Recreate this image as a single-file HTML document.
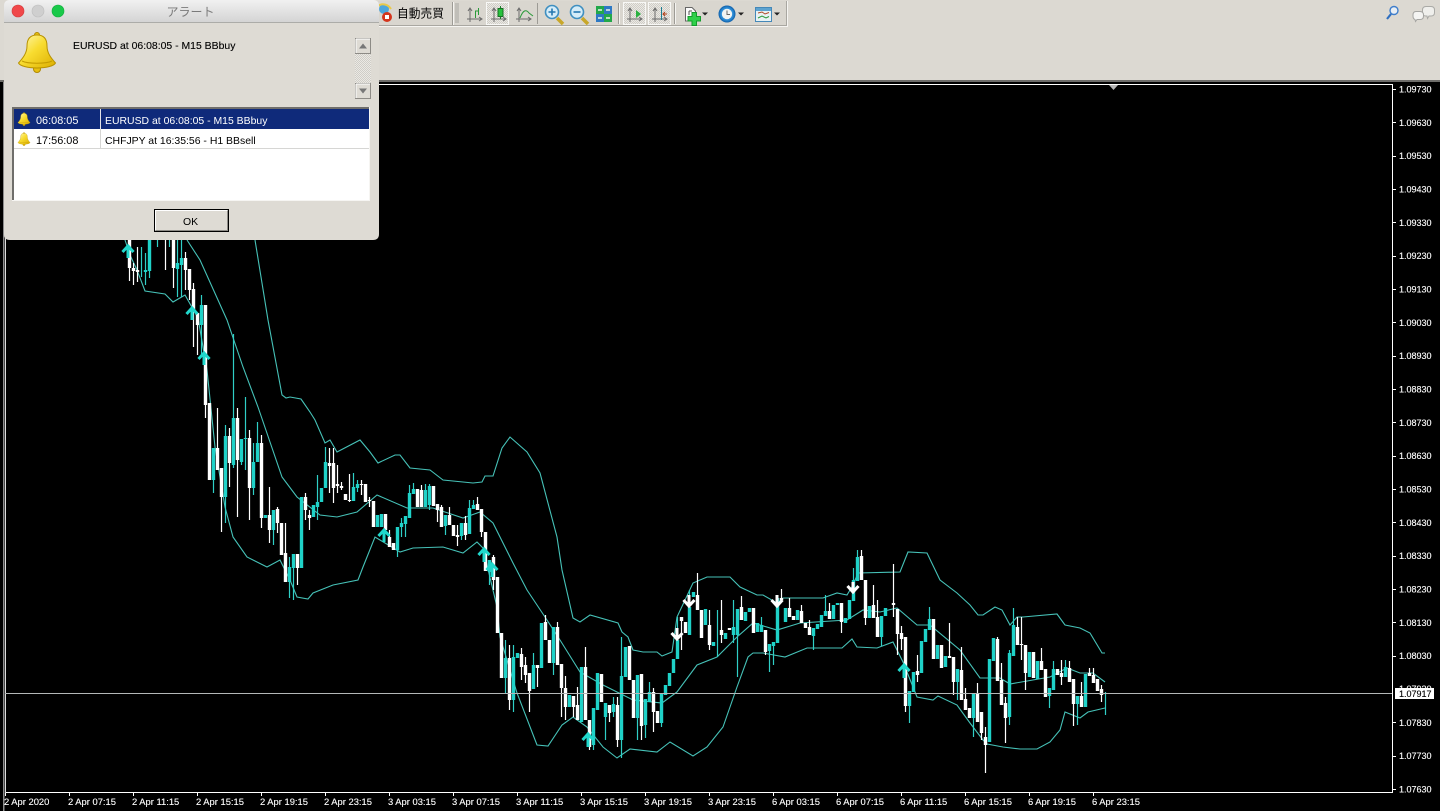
<!DOCTYPE html>
<html lang="ja"><head><meta charset="utf-8"><title>アラート</title>
<style>
html,body{margin:0;padding:0;background:#000;width:1440px;height:811px;overflow:hidden}
svg{display:block;filter:blur(.3px)}
text{font-family:"Liberation Sans","Noto Sans CJK JP",sans-serif}
.p text{font-size:9px;fill:#fff;stroke:#fff;stroke-width:.12px}
.t text{font-size:9.4px;fill:#fff;stroke:#fff;stroke-width:.12px}
.d{stroke:currentColor;stroke-width:.12px}
</style></head><body>
<svg width="1440" height="811" viewBox="0 0 1440 811" xmlns="http://www.w3.org/2000/svg">
<defs>
<pattern id="dots" width="2" height="2" patternUnits="userSpaceOnUse"><rect width="2" height="2" fill="#ebe9e4"/><rect width="1" height="1" fill="#cfcdc7"/><rect x="1" y="1" width="1" height="1" fill="#cfcdc7"/></pattern>
<linearGradient id="title" x1="0" y1="0" x2="0" y2="1"><stop offset="0" stop-color="#f1f1f1"/><stop offset="1" stop-color="#d4d4d4"/></linearGradient>
<linearGradient id="bellg" x1="0" y1="0" x2="1" y2="1"><stop offset="0" stop-color="#fff9b8"/><stop offset=".45" stop-color="#f8dc30"/><stop offset="1" stop-color="#dcae00"/></linearGradient>
<radialGradient id="blue"><stop offset=".7" stop-color="#2f8fd8"/><stop offset="1" stop-color="#0e5ea8"/></radialGradient>
<g id="bell"><circle cx="37" cy="69" r="3.500" fill="#e8bf10" stroke="#b08a00"/><circle cx="37" cy="35" r="2.500" fill="#e8bf10" stroke="#b08a00"/><path d="M37 35C30 35 27 39 27 46C27 53 23 58 18.500 63C20 66 28 68 37 68C46 68 54 66 55.500 63C51 58 47 53 47 46C47 39 44 35 37 35Z" fill="url(#bellg)" stroke="#b89200" stroke-width="1"/><path d="M22 61C28 64 46 64 52 61" fill="none" stroke="#c49c00"/></g>
<g id="axis" fill="none" stroke="#6b6b6b"><path d="M0 0V14M-3 11H12M-2 3L0 0L2 3M9 9L12 11L9 13"/></g>
</defs>

<rect width="1440" height="811" fill="#000"/>
<!-- toolbar area -->
<rect width="1440" height="80" fill="#dcd9d2"/>
<rect y="80" width="1440" height="2" fill="#6e6d6a"/>
<rect x="372" y="1" width="415" height="25" fill="#d9d6cf"/>
<path d="M372 26.500H787.500V1" fill="none" stroke="#f6f5f2"/>
<path d="M372 25.500H786.500V1" fill="none" stroke="#a9a7a1"/>

<circle cx="384" cy="9" r="5" fill="#4da6dc"/><path d="M378 6C382 3 388 4 391 9" stroke="#e9c94a" stroke-width="2" fill="none"/>
<circle cx="387" cy="17" r="5" fill="#d4351c"/><rect x="385" y="15" width="4" height="4" fill="#fff"/>
<text x="397" y="17.500" font-size="11.700" fill="#000" style="letter-spacing:.05px">自動売買</text>
<path d="M452.500 2V25" stroke="#9d9b95"/><path d="M453.500 2V25" stroke="#f5f4f1"/>
<path d="M455 4H459M455 6H459M455 8H459M455 10H459M455 12H459M455 14H459M455 16H459M455 18H459M455 20H459M455 22H459" stroke="#a8a6a0"/>

<use href="#axis" x="470" y="8"/><path d="M475.500 18V11H478M478.500 15V8" stroke="#2a9a3a" fill="none"/>
<rect x="486.500" y="2.500" width="22" height="22" fill="url(#dots)" stroke="#f8f8f6"/>
<use href="#axis" x="494" y="8"/><path d="M500.500 6V19" stroke="#1f7d2c"/><rect x="498" y="8.500" width="5" height="8" fill="#26c23c" stroke="#186e25"/>
<use href="#axis" x="519" y="8"/><path d="M520 18C523 10 526 9 529 13L533 16" stroke="#2a9a3a" fill="none"/>
<path d="M537.500 3V24" stroke="#9d9b95"/>

<path d="M557 18L563 24" stroke="#c8a72a" stroke-width="3.500"/><circle cx="552" cy="12" r="6.500" fill="#d5ecf8" stroke="#3f8fc0" stroke-width="1.600"/><path d="M548.500 12H555.500M552 8.500V15.500" stroke="#2477b0" stroke-width="1.600"/>
<path d="M582 18L588 24" stroke="#c8a72a" stroke-width="3.500"/><circle cx="577" cy="12" r="6.500" fill="#d5ecf8" stroke="#3f8fc0" stroke-width="1.600"/><path d="M573.500 12H580.500" stroke="#2477b0" stroke-width="1.600"/>
<rect x="596" y="6" width="8" height="8" fill="#22a84a"/><rect x="604" y="6" width="8" height="8" fill="#2e79c4"/><rect x="596" y="14" width="8" height="8" fill="#2e79c4"/><rect x="604" y="14" width="8" height="8" fill="#22a84a"/>
<path d="M598 10H602M606 10H610M598 18H602M606 18H610" stroke="#e8f4e8" stroke-width="1.500"/>
<path d="M618.500 3V24" stroke="#9d9b95"/><path d="M619.500 3V24" stroke="#f5f4f1"/>

<rect x="623.500" y="2.500" width="22" height="22" fill="url(#dots)" stroke="#f8f8f6"/>
<use href="#axis" x="630" y="8"/><path d="M636 10L641 14L636 18Z" fill="#28b040"/>
<rect x="648.500" y="2.500" width="22" height="22" fill="url(#dots)" stroke="#f8f8f6"/>
<use href="#axis" x="655" y="8"/><path d="M661.500 7V20" stroke="#1d7d90"/><path d="M667 14H663M665 12L663 14L665 16" stroke="#b0401a" fill="none"/>
<path d="M674.500 3V24" stroke="#9d9b95"/><path d="M675.500 3V24" stroke="#f5f4f1"/>

<path d="M685.500 7.500H692L695.500 11V21H685.500Z" fill="#fbfbfb" stroke="#666"/><path d="M689 11V15M689 11H692" stroke="#555" fill="none"/>
<path d="M692 12.500H696.500V16.500H700.500V21H696.500V25.500H692V21H688V16.500H692Z" fill="#2fd04a" stroke="#149c2c"/>
<path d="M702 12.500H708L705 15.500Z" fill="#222"/>
<circle cx="727" cy="14" r="8.500" fill="url(#blue)"/><circle cx="727" cy="14" r="5.200" fill="#f2f4f2"/><path d="M727 10.500V14.500H730" stroke="#666" fill="none"/>
<path d="M738 12.500H744L741 15.500Z" fill="#222"/>
<rect x="755.500" y="7.500" width="16" height="14" fill="#e8f2f4" stroke="#4588b8"/><rect x="756" y="8" width="15" height="3" fill="#5da3d0"/>
<path d="M758 13L762 12L765 14L769 12.500" stroke="#b04a28" fill="none"/><path d="M758 18L762 16L766 18L769 16.500" stroke="#2a9a3a" fill="none"/>
<path d="M774 12.500H780L777 15.500Z" fill="#222"/>

<!-- right icons -->
<circle cx="1394" cy="10.500" r="4" fill="#e8eef4" stroke="#3f7ecb" stroke-width="1.400"/><path d="M1391 14L1387 19" stroke="#2f6fc0" stroke-width="2.200"/>
<path d="M1426 6.500H1431Q1434.500 6.500 1434.500 10V12.500Q1434.500 16 1431 16H1429L1427.500 18.500L1427 16H1426Q1422.500 16 1422.500 12.500V10Q1422.500 6.500 1426 6.500Z" fill="#efefec" stroke="#aaaaa6"/>
<path d="M1416 11.500H1420Q1423.500 11.500 1423.500 15V16Q1423.500 19.500 1420 19.500H1417L1415.500 21.500L1415 19.500Q1413 19 1413 16V15Q1413 11.500 1416 11.500Z" fill="#f4f4f2" stroke="#a5a5a2"/>

<!-- chart frame -->
<rect x="3" y="82" width="1.500" height="729" fill="#8c8c8c"/>
<path d="M5.500 84.500H1392.500V792.500H5.500" fill="none" stroke="#fff"/>
<path d="M5.500 84V793" stroke="#ddd"/>
<path d="M1109 85H1118L1113.500 90Z" fill="#b5b5b5"/>
<!-- price ticks -->
<path d="M1393 89.500h3M1393 122.500h3M1393 156.500h3M1393 189.500h3M1393 222.500h3M1393 256.500h3M1393 289.500h3M1393 322.500h3M1393 356.500h3M1393 389.500h3M1393 422.500h3M1393 456.500h3M1393 489.500h3M1393 522.500h3M1393 556.500h3M1393 589.500h3M1393 622.500h3M1393 656.500h3M1393 722.500h3M1393 756.500h3M1393 789.500h3" stroke="#fff"/>
<g class="p">
<text x="1399" y="92.500">1.09730</text><text x="1399" y="126">1.09630</text><text x="1399" y="159">1.09530</text><text x="1399" y="192.500">1.09430</text><text x="1399" y="226">1.09330</text><text x="1399" y="259">1.09230</text><text x="1399" y="292.500">1.09130</text><text x="1399" y="326">1.09030</text><text x="1399" y="359">1.08930</text><text x="1399" y="392.500">1.08830</text><text x="1399" y="426">1.08730</text><text x="1399" y="459">1.08630</text><text x="1399" y="492.500">1.08530</text><text x="1399" y="526">1.08430</text><text x="1399" y="559">1.08330</text><text x="1399" y="592.500">1.08230</text><text x="1399" y="626">1.08130</text><text x="1399" y="659">1.08030</text><text x="1399" y="692">1.07930</text><text x="1399" y="726">1.07830</text><text x="1399" y="759">1.07730</text><text x="1399" y="792.500">1.07630</text>
</g>
<!-- time ticks -->
<path d="M5.500 793v3M69.500 793v3M133.500 793v3M197.500 793v3M261.500 793v3M325.500 793v3M389.500 793v3M453.500 793v3M517.500 793v3M581.500 793v3M645.500 793v3M709.500 793v3M773.500 793v3M837.500 793v3M901.500 793v3M965.500 793v3M1029.500 793v3M1093.500 793v3" stroke="#fff"/>
<g class="t">
<text x="4" y="805">2 Apr 2020</text><text x="68" y="805">2 Apr 07:15</text><text x="132" y="805">2 Apr 11:15</text><text x="196" y="805">2 Apr 15:15</text><text x="260" y="805">2 Apr 19:15</text><text x="324" y="805">2 Apr 23:15</text><text x="388" y="805">3 Apr 03:15</text><text x="452" y="805">3 Apr 07:15</text><text x="516" y="805">3 Apr 11:15</text><text x="580" y="805">3 Apr 15:15</text><text x="644" y="805">3 Apr 19:15</text><text x="708" y="805">3 Apr 23:15</text><text x="772" y="805">6 Apr 03:15</text><text x="836" y="805">6 Apr 07:15</text><text x="900" y="805">6 Apr 11:15</text><text x="964" y="805">6 Apr 15:15</text><text x="1028" y="805">6 Apr 19:15</text><text x="1092" y="805">6 Apr 23:15</text>
</g>

<!-- bands -->
<g fill="none" stroke="#46c2b8" stroke-width="1.100">
<polyline points="255,240 268,320 282,395 286,398 290,397 301,399 310,412 315,420 325,443 330,440 337,452 360,440 370,452 378,463 395,455 400,455 410,468 430,470 443,480 473,483 482,482 485,476 493,476 502,448 510,437 527,452 540,473 557,537 562,570 573,618 580,622 590,615 618,623 622,632 628,637 633,650 643,652 657,652 662,656 672,652 677,617 693,583 707,577 730,577 740,587 757,595 763,595 777,603 783,598 823,598 837,593 847,595 853,585 858,573 900,572 908,552 927,553 940,580 957,593 970,605 978,615 983,615 995,607 1002,610 1010,625 1017,617 1023,617 1057,614 1065,625 1080,628 1090,633 1102,653 1105,653"/>
<polyline points="187,240 200,260 227,320 243,367 258,407 282,477 297,497 320,515 337,517 357,512 377,495 407,508 433,508 463,518 480,512 493,523 513,563 527,590 545,617 560,640 580,672 603,685 633,700 662,703 677,692 697,665 717,657 737,637 753,623 777,630 800,623 847,620 863,610 880,612 897,608 917,625 930,625 960,650 980,678 1000,678 1010,684 1050,677 1067,668 1080,673 1093,673 1105,682"/>
<polyline points="125,240 130,255 137,270 145,291 165,294 173,302 185,295 198,318 207,370 215,447 225,507 233,537 247,557 267,567 280,560 290,580 297,597 308,599 313,593 333,585 358,580 363,567 375,537 400,552 413,548 443,547 463,553 477,542 483,548 497,607 500,637 517,693 537,745 548,746 562,725 573,717 587,727 603,747 617,758 630,749 657,752 670,742 693,756 707,747 723,727 737,687 748,657 753,653 763,653 785,657 807,648 842,648 852,639 857,647 877,648 893,642 903,662 917,697 933,700 938,696 957,705 970,723 983,740 987,744 1003,747 1020,749 1037,749 1050,742 1060,730 1065,712 1080,718 1088,712 1105,708"/>
</g>

<!-- candles -->
<g transform="translate(.5,0)">
<path fill="none" stroke="#2fcfc6" stroke-width="1.200" d="M141 247V277M145 253V285M149 271V278M157 240V247M169 240V247M177 240V297M181 240V297M201 295V355M213 480V493M225 425V523M233 334V468M241 439V465M245 397V470M253 443V495M257 422V462M273 530V545M289 557V598M293 568V600M317 475V520M325 447V488M353 473V501M357 480V492M397 527V557M401 518V537M405 516V537M409 485V518M413 483V494M425 484V507M429 484V510M445 515V535M461 523V540M469 500V534M473 500V509M489 560V585M505 640V693M513 645V712M533 653V689M553 627V675M593 708V750M605 703V740M613 697V717M621 637V758M637 675V740M645 699V738M649 682V702M661 693V727M677 617V659M689 590V635M717 610V657M733 600V643M737 609V677M761 617V632M769 644V672M773 642V665M813 628V650M825 595V616M853 568V601M857 550V581M881 616V646M909 691V723M929 607V630M957 669V700M973 693V737M1009 650V725M1013 608V656M1049 688V708M1053 661V690M1065 660V677M1077 696V725M1105 692V715"/>
<path fill="none" stroke="#1fd2c8" stroke-width="3.400" d="M145 270V272M149 240V271M177 263V269M181 258V265M201 305V325M213 448V480M225 436V497M233 418V465M241 439V462M245 438V439M253 462V488M257 443V462M265 515V518M273 510V530M289 567V582M293 554V568M301 497V568M313 505V517M317 502V507M321 488V502M325 462V488M353 487V501M357 484V488M377 515V527M381 514V527M397 527V550M401 523V527M405 516V524M409 493V518M413 489V494M425 490V507M429 486V505M445 515V526M461 523V536M469 508V534M473 505V509M489 560V572M505 658V678M513 657V700M517 653V658M533 665V689M541 623V668M553 627V663M569 695V707M581 667V722M593 708V745M597 673V710M605 703V717M613 704V712M621 676V740M625 647V677M637 675V718M645 699V725M649 692V702M661 693V723M665 685V695M669 673V686M673 659V673M677 640V659M689 607V635M693 592V597M705 609V625M713 642V646M725 633V639M733 627V635M737 609V635M745 612V621M749 608V612M757 623V632M761 625V632M769 644V651M773 642V646M777 598V643M785 608V622M797 610V620M813 628V636M817 624V629M821 615V627M825 611V616M833 605V619M837 603V605M845 618V623M849 600V619M853 580V601M857 557V581M869 606V618M881 616V637M885 608V616M909 691V706M913 672V692M921 641V673M925 629V642M929 619V630M937 645V659M945 656V667M957 669V682M973 693V718M989 659V742M993 638V661M1009 653V717M1013 625V656M1029 652V677M1037 661V679M1049 688V696M1053 669V690M1065 667V677M1077 696V704M1085 674V707M1105 693V694"/>
<path fill="none" stroke="#fff" stroke-width="1.200" d="M129 240V281M133 263V285M137 247V282M165 240V270M173 240V288M185 252V290M189 269V300M193 283V347M197 313V355M205 405V418M217 408V470M221 468V532M229 428V487M237 408V517M249 430V520M261 435V528M269 487V543M277 507V533M285 523V582M297 568V585M305 493V520M309 510V530M329 448V493M333 448V503M337 465V493M341 482V490M349 474V502M361 480V495M369 497V507M389 530V547M421 485V507M437 504V522M441 505V527M449 507V525M457 525V546M465 516V540M477 497V510M481 509V537M493 555V590M509 645V710M521 648V680M525 657V683M529 673V712M537 665V687M545 615V640M557 622V665M561 664V717M565 676V720M573 696V717M577 687V720M585 647V720M589 720V750M609 705V722M617 697V747M641 674V740M653 688V732M681 617V650M697 573V610M709 610V650M721 600V643M741 596V620M765 630V655M781 589V600M789 598V617M801 605V623M809 620V635M829 603V619M841 603V633M861 550V580M865 580V625M873 585V618M877 600V637M893 564V617M897 609V655M901 626V650M905 637V712M917 655V682M933 619V659M949 623V658M953 657V695M961 647V700M965 688V710M977 683V722M981 712V740M985 727V773M997 637V681M1001 663V705M1005 697V743M1017 617V645M1021 617V660M1025 645V690M1041 648V670M1045 669V697M1061 660V685M1069 661V682M1073 679V726M1081 682V707M1089 668V676M1093 668V683M1101 685V702"/>
<path fill="none" stroke="#fff" stroke-width="3.400" d="M129 240V268M133 268V271M137 270V272M173 240V268M185 258V270M189 269V290M193 289V310M197 313V325M205 305V405M209 403V480M217 448V470M221 468V497M229 436V463M237 418V460M249 438V488M261 443V518M269 515V530M277 509V523M281 523V555M285 553V582M297 554V568M305 497V510M309 515V518M329 463V466M333 463V488M337 484V486M341 486V488M345 494V500M349 500V501M361 484V485M365 484V502M369 500V501M373 501V527M385 514V530M389 537V547M393 543V550M417 489V507M421 490V507M433 486V506M437 504V510M441 507V527M449 515V525M453 525V536M457 535V537M465 523V535M477 504V510M481 509V532M485 532V571M493 557V580M497 577V633M501 633V678M509 658V700M521 654V667M525 665V675M529 673V691M537 665V668M545 622V640M549 640V663M557 627V665M561 664V688M565 688V707M573 696V707M577 705V720M585 667V720M589 720V747M601 674V702M609 705V713M617 705V740M629 646V680M633 680V718M641 674V726M653 692V712M657 711V723M681 617V621M685 622V633M697 595V610M701 610V638M709 625V645M721 630V635M729 628V630M741 607V620M753 608V633M765 630V652M781 598V600M789 608V617M793 616V620M801 611V623M805 623V628M809 627V635M829 611V619M841 603V622M861 556V580M865 580V618M873 605V618M877 617V637M893 603V605M897 609V634M901 633V639M905 637V706M917 671V675M933 619V659M941 645V668M949 656V658M953 657V682M961 670V700M965 699V710M969 708V718M977 693V722M981 712V733M985 737V745M997 639V681M1001 680V705M1005 703V718M1017 627V645M1021 644V645M1025 645V673M1033 652V678M1041 661V670M1045 669V697M1057 669V675M1061 673V677M1069 668V682M1073 679V704M1081 696V707M1089 673V676M1093 675V683M1097 679V691M1101 689V695"/>
</g>

<!-- arrows -->
<g fill="none" stroke="#20d8cc" stroke-width="3">
<path d="M122.500 252L128 246L133.500 252M128 246V258"/><path d="M186.500 314L192 308L197.500 314M192 308V320"/><path d="M198.500 359L204 353L209.500 359M204 353V365"/><path d="M378.500 536L384 530L389.500 536M384 530V542"/><path d="M478.500 555L484 549L489.500 555M484 549V562"/><path d="M486.500 570L492 564L497.500 570M492 564V577"/><path d="M582.500 740L588 734L593.500 740M588 734V747"/><path d="M898.500 671L904 665L909.500 671M904 665V678"/>
</g>
<g fill="none" stroke="#fff" stroke-width="3">
<path d="M671.500 633L677 639L682.500 633M677 639V628"/><path d="M683.500 600L689 606L694.500 600M689 606V595"/><path d="M771.500 600L777 606L782.500 600M777 606V595"/><path d="M847.500 586L853 592L858.500 586M853 592V582"/>
</g>

<!-- crosshair / current price -->
<path d="M5 693.500H1392" stroke="#b4b8b8"/>
<rect x="1395" y="688" width="39" height="11" fill="#fff"/>
<text x="1399" y="697" font-size="9" fill="#000" class="d" color="#000">1.07917</text>

<!-- dialog -->
<path d="M10 0H373Q379 0 379 6V234Q379 240 373 240H10Q4 240 4 234V6Q4 0 10 0Z" fill="#dedbd4"/>
<path d="M10 0H373Q379 0 379 6V22H4V6Q4 0 10 0Z" fill="url(#title)"/>
<path d="M4 22.500H379" stroke="#acaca8"/>
<circle cx="18" cy="11" r="6" fill="#f0484a" stroke="#d23a3a" stroke-width=".6"/><circle cx="38" cy="11" r="6" fill="#cfcfcf" stroke="#bdbdbd" stroke-width=".6"/><circle cx="58" cy="11" r="6" fill="#19c94a" stroke="#12ad3c" stroke-width=".6"/>
<text x="190.500" y="16" font-size="12" fill="#7a7a7a" text-anchor="middle">アラート</text>
<use href="#bell"/>
<text x="73" y="49" font-size="10.450" fill="#000" class="d" color="#000">EURUSD at 06:08:05 - M15 BBbuy</text>
<!-- scrollbar -->
<rect x="355" y="54" width="16" height="29" fill="url(#dots)"/>
<rect x="355.500" y="38.500" width="15" height="15" fill="#dedbd4" stroke="#8d8b86"/><path d="M356 39H370M356 39V53" stroke="#fff"/><path d="M359 48.500H367L363 43.500Z" fill="#777"/>
<rect x="355.500" y="83.500" width="15" height="15" fill="#dedbd4" stroke="#8d8b86"/><path d="M356 84H370M356 84V98" stroke="#fff"/><path d="M359 88.500H367L363 93.500Z" fill="#777"/>
<!-- list -->
<rect x="12" y="107" width="358" height="94" fill="#fff"/>
<path d="M13 200V108H369" fill="none" stroke="#6f6e6b" stroke-width="2"/>
<path d="M12 200.500H369.500V107" fill="none" stroke="#f6f5f2"/>
<rect x="14" y="109" width="355" height="20" fill="#0f2a7a"/>
<path d="M14 148.500H369" stroke="#d6d6d4"/>
<path d="M100.500 109V129" stroke="#e4e4e8"/><path d="M100.500 129V149" stroke="#d6d6d4"/>
<use href="#bell" transform="translate(11.800,101.800) scale(.33)"/>
<use href="#bell" transform="translate(11.800,121.800) scale(.33)"/>
<text x="36" y="124" font-size="10.900" fill="#fff">06:08:05</text>
<text x="105" y="124" font-size="10.450" fill="#fff">EURUSD at 06:08:05 - M15 BBbuy</text>
<text x="36" y="144" font-size="10.900" fill="#000">17:56:08</text>
<text x="105" y="144" font-size="10.450" fill="#000">CHFJPY at 16:35:56 - H1 BBsell</text>
<!-- OK -->
<rect x="154.500" y="209.500" width="74" height="22" fill="#dedbd4" stroke="#000"/>
<path d="M155.500 230V210.500H227.500" fill="none" stroke="#fff"/><path d="M155.500 230.500H227.500V210.500" fill="none" stroke="#8d8b86"/>
<text x="190.500" y="225" font-size="10.450" fill="#000" text-anchor="middle">OK</text>
</svg>
</body></html>
